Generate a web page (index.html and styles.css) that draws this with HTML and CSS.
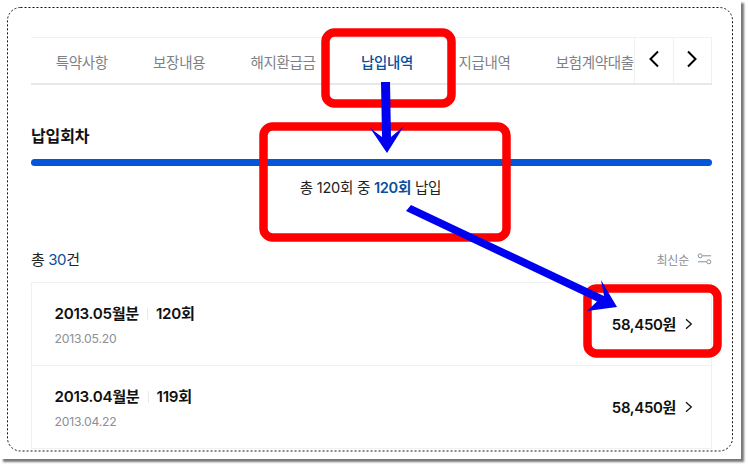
FILE: index.html
```html
<!DOCTYPE html>
<html lang="ko">
<head>
<meta charset="utf-8">
<title>납입내역</title>
<link rel="stylesheet" href="styles.css">
</head>
<body>
<div class="shot">
  <main class="page">
    <nav class="tabs">
      <a class="tab">특약사항</a>
      <a class="tab">보장내용</a>
      <a class="tab">해지환급금</a>
      <a class="tab active">납입내역</a>
      <a class="tab">지급내역</a>
      <a class="tab">보험계약대출</a>
      <div class="tab-nav">
        <button class="tab-btn" aria-label="이전"><svg width="12" height="18" viewBox="0 0 12 18"><path d="M10 1.500 2.500 9l7.500 7.500" fill="none" stroke="#000" stroke-width="2"/></svg></button>
        <button class="tab-btn" aria-label="다음"><svg width="12" height="18" viewBox="0 0 12 18"><path d="M2 1.500 9.500 9 2 16.500" fill="none" stroke="#000" stroke-width="2"/></svg></button>
      </div>
    </nav>
    <h2 class="title">납입회차</h2>
    <div class="bar"></div>
    <p class="summary">총 120회 중 <b class="accent">120회</b> 납입</p>
    <div class="list-head">
      <span class="count">총 <span class="accent">30</span>건</span>
      <span class="sort">최신순
        <svg width="15" height="12" viewBox="0 0 15 12"><g fill="none" stroke="#8b8f96" stroke-width="1"><circle cx="3.200" cy="2.800" r="2"/><path d="M5.500 2.800H14M1 8.800h8.500"/><circle cx="11.800" cy="8.800" r="2"/></g></svg>
      </span>
    </div>
    <ul class="rows">
      <li class="row">
        <div class="row-main">
          <div class="row-title"><span>2013.05월분</span><i class="sep"></i><span>120회</span></div>
          <div class="row-date">2013.05.20</div>
        </div>
        <div class="amount">58,450원<svg width="8" height="12" viewBox="0 0 8 12"><path d="M1 1.200 6.300 6 1 10.800" fill="none" stroke="#111" stroke-width="1.300"/></svg></div>
      </li>
      <li class="row">
        <div class="row-main">
          <div class="row-title"><span>2013.04월분</span><i class="sep"></i><span>119회</span></div>
          <div class="row-date">2013.04.22</div>
        </div>
        <div class="amount">58,450원<svg width="8" height="12" viewBox="0 0 8 12"><path d="M1 1.200 6.300 6 1 10.800" fill="none" stroke="#111" stroke-width="1.300"/></svg></div>
      </li>
    </ul>
  </main>

  <svg class="marks" width="748" height="467" viewBox="0 0 748 467" aria-hidden="true">
    <g fill="none" stroke="#f00" stroke-width="8.500">
      <rect x="325.500" y="32.500" width="126" height="71" rx="9"/>
      <rect x="263.500" y="126.500" width="243" height="111" rx="9"/>
      <rect x="587.500" y="288.500" width="130" height="65" rx="9"/>
    </g>
    <g fill="#0000f0">
      <path d="M381 82h9l1 55 13-11-17 27-17-25 12 9z"/>
      <path d="M411 205 604 296 601 280 617 307 587 311 597 301.500 406 211z"/>
    </g>
    <rect class="dash" x="7.500" y="7.500" width="725" height="443.500" rx="13"/>
  </svg>
</div>
</body>
</html>
```

FILE: styles.css
```css
* { box-sizing: border-box; }
html, body { margin: 0; padding: 0; background: #fff; }
body { font-family: Inter, "Noto Sans CJK KR", sans-serif; color: #111; }
.shot {
  position: relative;
  width: 748px;
  height: 467px;
  overflow: hidden;
}
.page {
  width: 741px;
  height: 459px;
  padding: 37px 29px 0 31px;
  overflow: hidden;
  background: #fff;
  box-shadow: 3px 3px 2px #777;
}
.tabs {
  position: relative;
  display: flex;
  height: 48px;
  padding-left: 2px;
  overflow: hidden;
  border-top: 1px solid #f0f1f2;
  border-bottom: 2px solid #e6e8eb;
}
.tab {
  flex: none;
  height: 47px;
  padding: 0 22.700px;
  font-size: 14.500px;
  line-height: 49px;
  letter-spacing: -.33px;
  color: #7d8187;
  white-space: nowrap;
}
.tab.active {
  color: #0a4f9c;
  font-weight: 500;
  border-bottom: 2px solid #0a4f9c;
}
.tab-nav {
  position: absolute;
  top: -2px;
  right: 0;
  display: flex;
}
.tab-btn {
  display: flex;
  align-items: center;
  justify-content: center;
  width: 39.500px;
  height: 48px;
  padding: 0 0 3px;
  background: #fff;
  border: 1px solid #eeeff1;
}
.tab-btn + .tab-btn { margin-left: -1px; }
.title {
  margin: 40px 0 0;
  font-size: 16px;
  line-height: 22px;
  font-weight: 700;
  letter-spacing: -.1px;
  color: #111;
}
.bar {
  height: 7px;
  margin-top: 12px;
  border-radius: 4px;
  background: #0455d8;
}
.summary {
  margin: 12px 0 0;
  padding-right: 2px;
  font-size: 14.600px;
  line-height: 20px;
  letter-spacing: -.28px;
  text-align: center;
  color: #222;
}
.summary b { font-weight: 600; }
.accent { color: #0a4f9c; }
.list-head {
  display: flex;
  justify-content: space-between;
  align-items: center;
  margin-top: 50px;
  height: 20px;
}
.count { font-size: 15px; letter-spacing: -.4px; color: #222; }
.sort {
  display: flex;
  align-items: center;
  gap: 8px;
  padding-top: 2px;
  font-size: 12px;
  letter-spacing: -.2px;
  color: #8b8f96;
}
.rows {
  list-style: none;
  margin: 14px 0 0;
  padding: 0;
  border: 1px solid #eff0f2;
  border-bottom: 0;
}
.row {
  display: flex;
  justify-content: space-between;
  align-items: center;
  height: 83px;
  padding: 0 18px 0 22.500px;
  border-bottom: 1px solid #eff0f2;
}
.row-main { padding-top: 3px; }
.row-title {
  display: flex;
  align-items: center;
  font-size: 15.200px;
  line-height: 22px;
  font-weight: 600;
  letter-spacing: -.3px;
  color: #111;
}
.sep {
  width: 1px;
  height: 12px;
  margin: 0 8px;
  background: #e8e9eb;
}
.row-date {
  margin-top: 5px;
  font-size: 12.200px;
  line-height: 18px;
  letter-spacing: -.2px;
  color: #8b8f96;
}
.amount {
  display: flex;
  align-items: center;
  gap: 9px;
  padding-bottom: 1px;
  font-size: 15px;
  font-weight: 600;
  letter-spacing: -.35px;
  color: #111;
}
.marks {
  position: absolute;
  top: 0;
  left: 0;
  pointer-events: none;
}
.dash {
  fill: none;
  stroke: #111;
  stroke-width: 1;
  stroke-dasharray: 2 2;
}
```
